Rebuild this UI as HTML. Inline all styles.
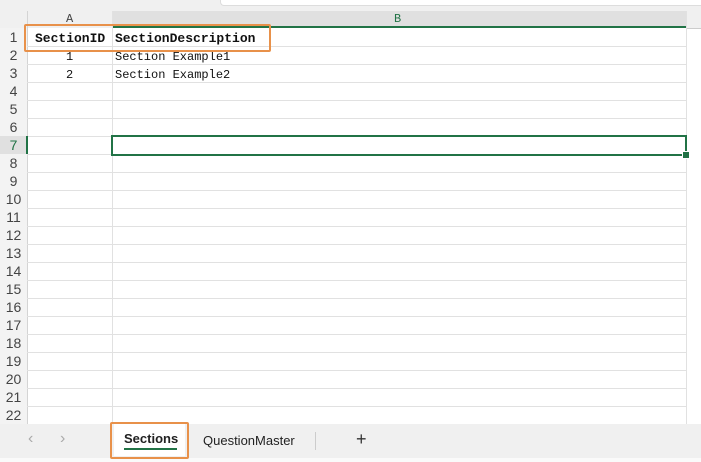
<!DOCTYPE html>
<html><head><style>
body{margin:0;width:701px;height:462px;overflow:hidden;background:#fff;font-family:"Liberation Mono","Noto Sans CJK SC",monospace;position:relative}
.a{position:absolute}
.rn{position:absolute;left:0;width:27px;text-align:center;font-family:"Liberation Sans",sans-serif;font-size:14px;color:#444;height:18px;line-height:19px;background:#f3f3f3}
.hl{position:absolute;left:0;height:1px;width:686px;background:#e1e1e1}
.t{position:absolute;font-size:12px;color:#111;height:18px;line-height:18px}
</style></head><body>
<div class="a" style="left:0;top:0;width:701px;height:11px;background:#f0f0f0"></div>
<div class="a" style="left:220px;top:0;width:481px;height:5px;background:#fff;border-bottom:1px solid #ddd;border-left:1px solid #ddd;border-bottom-left-radius:4px"></div>
<div class="a" style="left:0;top:11px;width:701px;height:17px;background:#f0f0f0"></div>
<div class="a" style="left:112px;top:11px;width:574px;height:16px;background:#e0e0e0"></div>
<div class="a" style="left:112px;top:26px;width:574px;height:2px;background:#217346"></div>
<div class="a" style="left:686px;top:28px;width:15px;height:1px;background:#ccc"></div>
<div class="a" style="left:66px;top:12px;font-family:'Liberation Mono',monospace;font-size:12px;color:#444">A</div>
<div class="a" style="left:394px;top:12px;font-family:'Liberation Mono',monospace;font-size:12px;color:#217346">B</div>
<div class="a" style="left:0;top:28px;width:27px;height:396px;background:#f3f3f3"></div>
<div class="a" style="left:27px;top:11px;width:1px;height:413px;background:#d4d4d4"></div>
<div class="a" style="left:112px;top:11px;width:1px;height:413px;background:#e1e1e1"></div>
<div class="a" style="left:686px;top:11px;width:1px;height:413px;background:#e1e1e1"></div>
<div id="rows"></div>
<div class="rn" style="top:136px;background:#e0e0e0;color:#217346">7</div>
<div class="a" style="left:26px;top:136px;width:2px;height:18px;background:#217346"></div>
<div class="t" style="left:35px;top:30px;font-weight:bold;font-size:13px">SectionID</div>
<div class="t" style="left:115px;top:30px;font-weight:bold;font-size:13px">SectionDescription</div>
<div class="t" style="left:66px;top:48px">1</div>
<div class="t" style="left:115px;top:48px">Section Example1</div>
<div class="t" style="left:66px;top:66px">2</div>
<div class="t" style="left:115px;top:66px">Section Example2</div>
<div class="a" style="left:111px;top:135px;width:572px;height:17px;border:2px solid #217346"></div>
<div class="a" style="left:682px;top:151px;width:6px;height:6px;background:#217346;border:1px solid #fff"></div>
<div class="a" style="left:24px;top:24px;width:243px;height:24px;border:2px solid #e8914a;border-radius:2px"></div>
<div class="a" style="left:0;top:424px;width:701px;height:34px;background:#f0f0f0"></div>
<div class="a" style="left:0;top:458px;width:701px;height:4px;background:#fafafa"></div>
<div class="a" style="left:28px;top:430px;font-family:'Liberation Sans',sans-serif;font-size:16px;color:#aaa">&lsaquo;</div>
<div class="a" style="left:60px;top:430px;font-family:'Liberation Sans',sans-serif;font-size:16px;color:#aaa">&rsaquo;</div>
<div class="a" style="left:114px;top:424px;width:71px;height:32px;background:#fff"></div>
<div class="a" style="left:110px;top:422px;width:75px;height:33px;border:2px solid #e8914a;border-radius:2px"></div>
<div class="a" style="left:124px;top:431px;font-family:'Liberation Sans',sans-serif;font-size:13px;font-weight:bold;color:#222">Sections</div>
<div class="a" style="left:124px;top:448px;width:53px;height:2px;background:#217346"></div>
<div class="a" style="left:203px;top:433px;font-family:'Liberation Sans',sans-serif;font-size:13px;color:#222">QuestionMaster</div>
<div class="a" style="left:315px;top:432px;width:1px;height:18px;background:#ccc"></div>
<div class="a" style="left:356px;top:429px;font-family:'Liberation Sans',sans-serif;font-size:18px;color:#333">+</div>
<script>
var h='';for(var i=1;i<=22;i++){var t=28+(i-1)*18;if(i!=7)h+='<div class="rn" style="top:'+t+'px">'+i+'</div>';h+='<div class="hl" style="top:'+(t+18)+'px"></div>';}
document.getElementById('rows').innerHTML=h;
</script>
</body></html>
